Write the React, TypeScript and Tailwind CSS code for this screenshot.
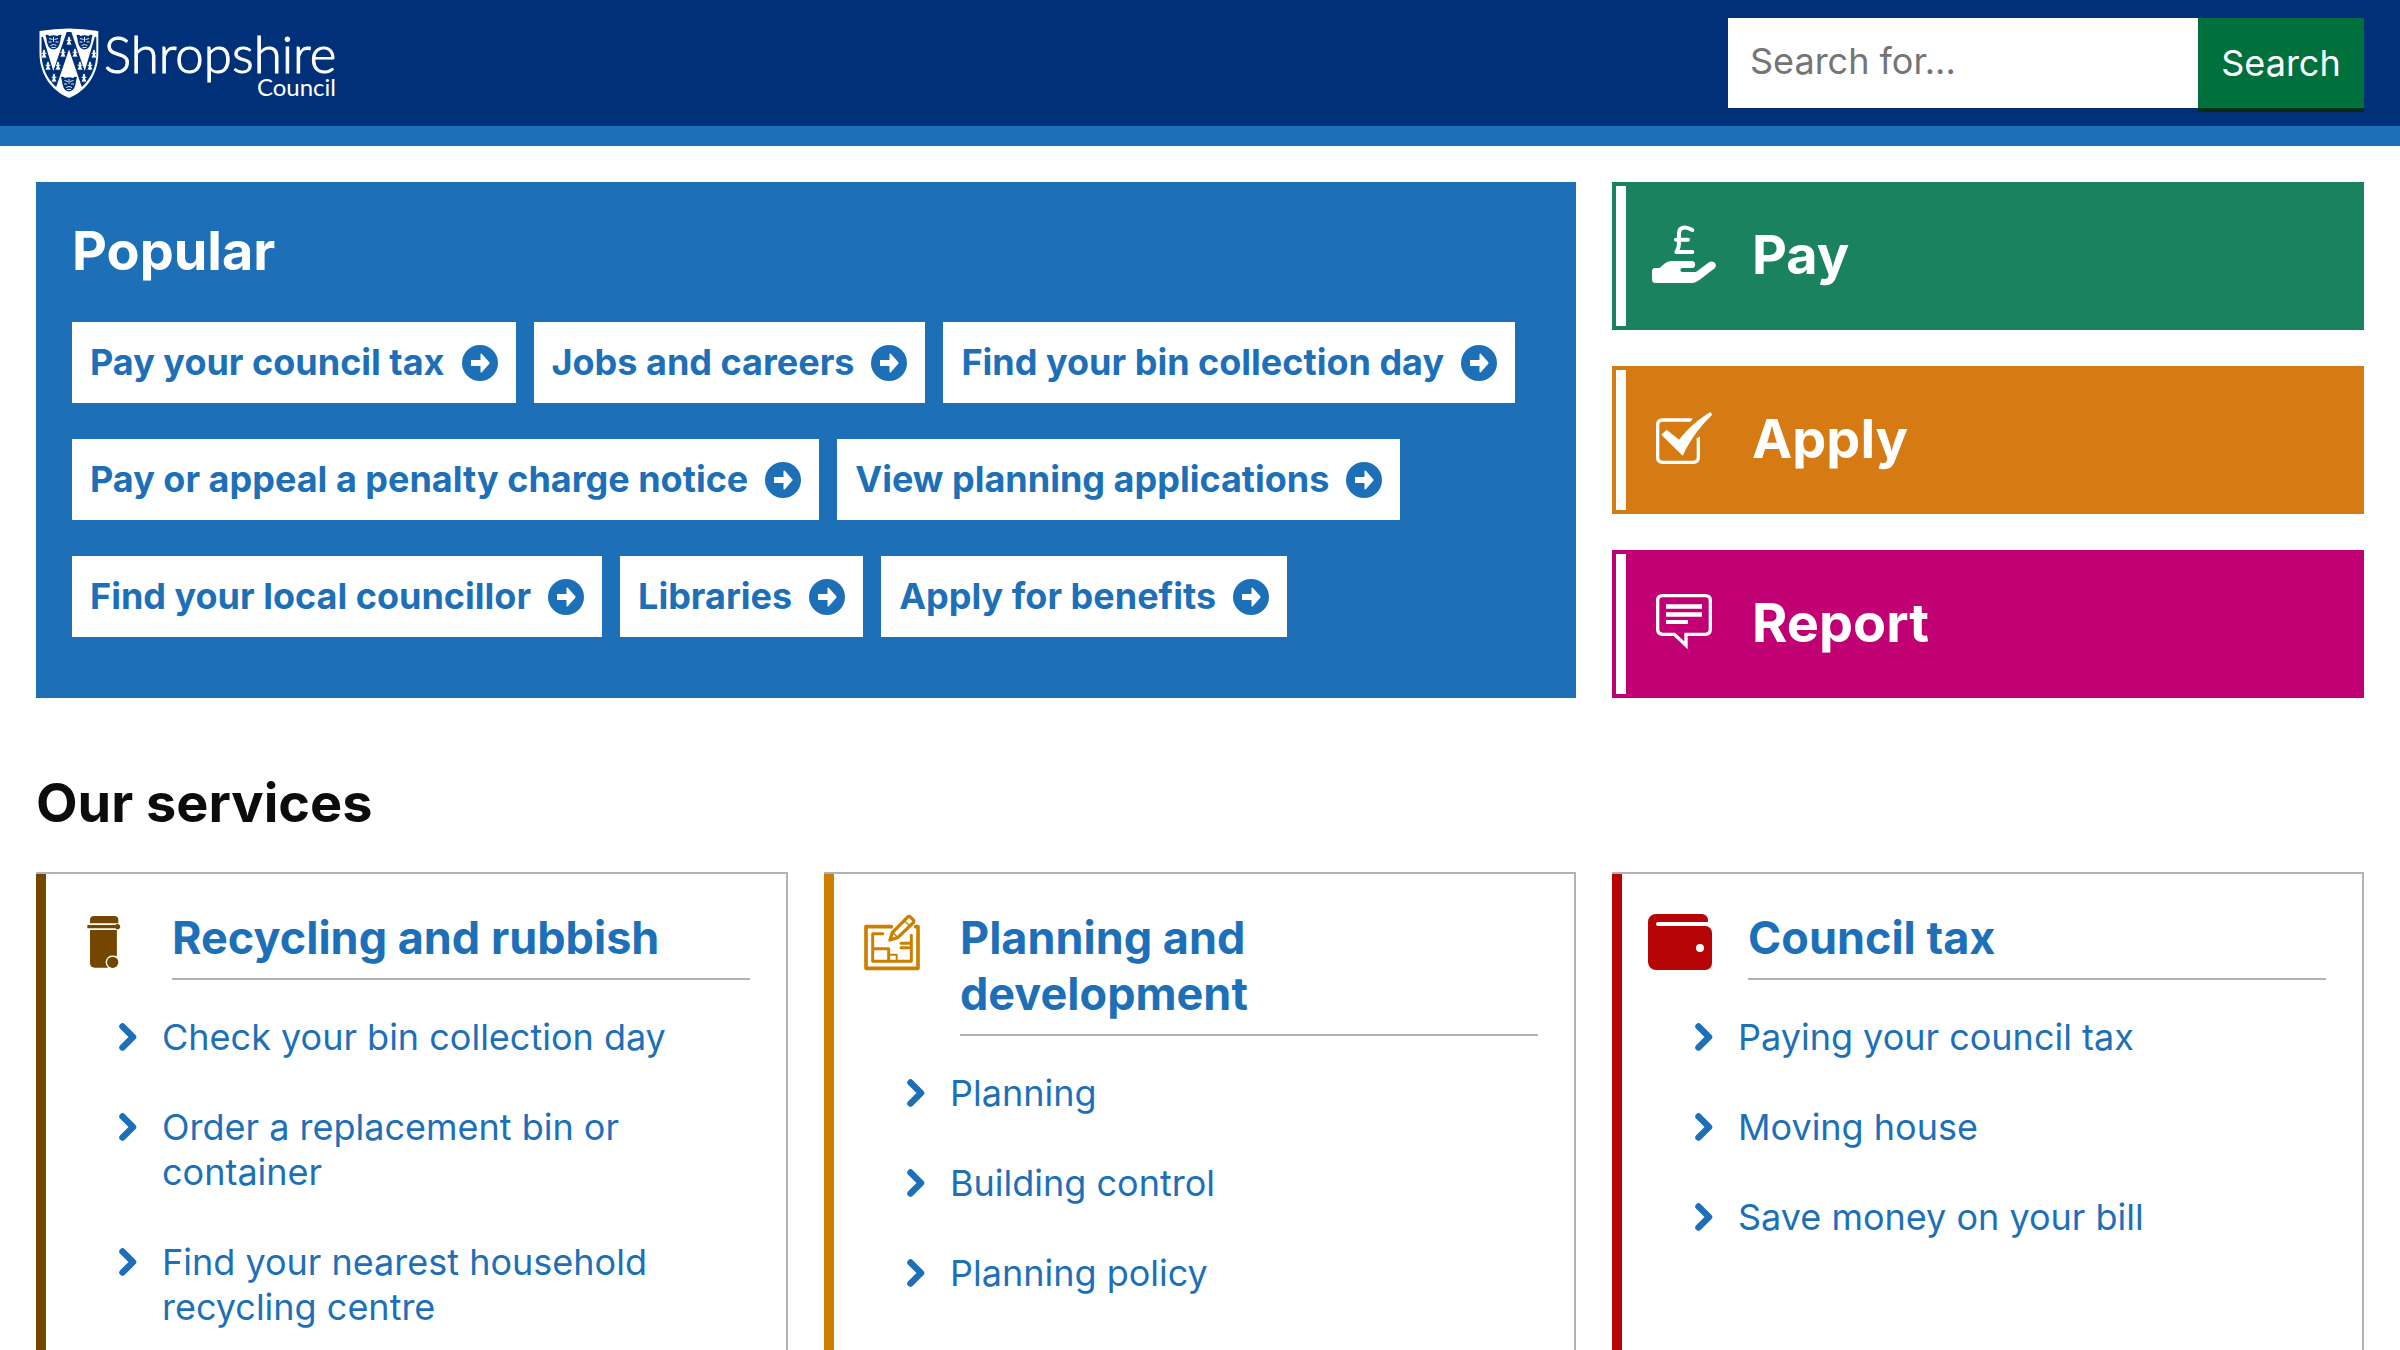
import type { ReactNode } from 'react';

const popularLinks = [
  'Pay your council tax',
  'Jobs and careers',
  'Find your bin collection day',
  'Pay or appeal a penalty charge notice',
  'View planning applications',
  'Find your local councillor',
  'Libraries',
  'Apply for benefits',
];

const ermineSpots = [
  [33, 13],
  [27, 25],
  [39, 25],
  [8, 26],
  [58, 26],
  [12, 38],
  [22, 38],
  [44, 38],
  [54, 38],
  [18, 50],
  [48, 50],
];

const leopardFaces = [
  [17.5, 14],
  [48.5, 14],
  [33, 56],
];

const Logo: React.FC = () => (
  <svg className="h-[76px] w-[304px] overflow-visible" viewBox="0 0 304 76" role="img" aria-label="Shropshire Council">
    <path d="M3.5 3Q33-2 62.3 3v22C62.3 47 50 63 33 70 16 63 3.5 47 3.5 25z" fill="#fff" />
    <path d="M5.5 9v16c0 19 10 32 21 38.500l3 1.500h7l3-1.500C50.500 57 60.300 44 60.300 25V9L36 4h-6z" fill="#003078" />
    <path d="M5.500 4 31 3 17.300 43zM60.300 4 35 3l13.700 40zM33 21.500 19.500 61 33 68l13.500-7z" fill="#fff" />
    {leopardFaces.map(([x, y]) => (
      <g key={`${x}-${y}`} transform={`translate(${x} ${y})`}>
        <path
          d="M-8-7q2-1 4 1 4-1.500 8 0 2-2 4-1l-1 4Q7 0 5.500 3.500 4 7 0 7.500-4 7-5.500 3.500-7 0-7-3z"
          fill="#003078"
        />
        <path
          d="M-4.500-3.500-1-2.500M4.500-3.500 1-2.500M-5 0h3M5 0H2M0-5v5M-3 3.500Q0 1.500 3 3.500M-2 5.500h4"
          stroke="#fff"
          strokeWidth="0.9"
          fill="none"
        />
      </g>
    ))}
    {ermineSpots.map(([x, y]) => (
      <path
        key={`${x}-${y}`}
        transform={`translate(${x} ${y})`}
        d="M0-4.500 1.300-3 .7-1.500 3-1 1 .2 2.500 4 .7 3.200 0 4.500-.7 3.200-2.500 4-1 .2-3-1-.7-1.500-1.300-3z"
        fill="#fff"
      />
    ))}
    <text
      x="68"
      y="45"
      fill="#fff"
      stroke="#fff"
      strokeWidth="1"
      fontSize="51"
      fontFamily="Lato, sans-serif"
      fontWeight="300"
    >
      Shropshire
    </text>
    <text x="300" y="68" fill="#fff" fontSize="24" fontFamily="Lato, sans-serif" textAnchor="end">
      Council
    </text>
  </svg>
);

const Icon: React.FC<{ children: ReactNode }> = ({ children }) => (
  <svg className="h-14 w-16 shrink-0 overflow-visible" viewBox="0 0 192 168" fill="none" aria-hidden="true">
    {children}
  </svg>
);

const PayIcon: React.FC = () => (
  <Icon>
    <path
      fill="currentColor"
      d="M8 126h14c10-6 18-21 38-21h59a10.500 10.500 0 0 1 0 21H91a6 6 0 0 0 0 12h41l39-29c12-8 28 6 17 18l-42 32c-9 7-15 12-28 12H10c-6 0-10-4-10-10v-25c0-6 3-10 8-10z"
    />
    <path
      stroke="currentColor"
      strokeWidth="12"
      strokeLinecap="round"
      strokeLinejoin="round"
      d="M121 12C98 0 81 3 81 22v30c0 14-2 16-8 26h48M72 41h36"
    />
  </Icon>
);

const ApplyIcon: React.FC = () => (
  <Icon>
    <path
      stroke="currentColor"
      strokeWidth="10"
      d="M121 30H32q-15 0-15 15v97q0 15 15 15h92q15 0 15-15V80"
    />
    <path fill="#d67a14" d="m126 24-14 14 12 4 16-18zM134 88l12-16-12-2z" />
    <path fill="currentColor" d="m28 74 16-15 37 30c28-34 60-64 95-83l4 9c-34 32-64 72-88 122z" />
  </Icon>
);

const ReportIcon: React.FC = () => (
  <Icon>
    <path
      stroke="currentColor"
      strokeWidth="10"
      d="M32 5h128q15 0 15 15v86q0 15-15 15h-58v33l-35-33H32q-15 0-15-15V20Q17 5 32 5z"
    />
    <path fill="currentColor" d="M42 31h108v13H42zM42 55h108v13H42zM42 78h66v12H42z" />
  </Icon>
);

const BinIcon: React.FC = () => (
  <Icon>
    <path fill="currentColor" d="M54 28V18q0-12 12-12h61q12 0 12 12v10zM54 48h80v113H68q-14 0-14-14z" />
    <path fill="currentColor" d="M46 33h84q2-4 9-3 6 3 6 8t-6 8q-7 1-9-3H46z" />
    <circle cx="122" cy="145" r="21" fill="#fff" />
    <path fill="#fff" d="M118 128h30v36h-30z" />
    <path fill="currentColor" d="M118 48h16v76h-16z" />
    <circle cx="122" cy="145" r="17" fill="currentColor" />
  </Icon>
);

const PlanIcon: React.FC = () => (
  <Icon>
    <g stroke="currentColor" strokeLinecap="round" strokeLinejoin="round">
      <path strokeWidth="11" d="M94 38H18v125h156V38h-7" />
      <path strokeWidth="9" d="M68 59H38v83h116V64M40 104h46v36M123 88h28M123 101h28" />
      <path strokeWidth="6" d="M88 122h22v18" />
      <path strokeWidth="10" d="m90 78 7-22 45-46q5-5 10 0l7 7q5 5 0 10l-46 44z" />
      <path strokeWidth="4" d="m133 20 18 17M99 56l14 14" />
    </g>
  </Icon>
);

const WalletIcon: React.FC = () => (
  <Icon>
    <path
      fill="currentColor"
      d="M24 0h138a18 18 0 0 1 18 18v6H30a6 6 0 0 0 0 12h142a20 20 0 0 1 20 20v92a20 20 0 0 1-20 20H24a24 24 0 0 1-24-24V24A24 24 0 0 1 24 0z"
    />
    <circle cx="156" cy="102" r="12" fill="#fff" />
  </Icon>
);

const CircleArrow: React.FC = () => (
  <svg className="size-9 shrink-0" viewBox="0 0 36 36" aria-hidden="true">
    <circle cx="18" cy="18" r="18" fill="currentColor" />
    <path fill="#fff" d="M9 15h9.500V9.500q0-1.500 1.300-.7l7.500 8.500q.6.700 0 1.400l-7.500 8.500q-1.300.8-1.300-.7V21H9z" />
  </svg>
);

const Chevron: React.FC = () => (
  <svg className="mt-2 h-7 w-[18px] shrink-0" viewBox="0 0 18 28" fill="none" aria-hidden="true">
    <path
      d="M3.500 3.500 14 14 3.500 24.500"
      stroke="currentColor"
      strokeWidth="6.500"
      strokeLinecap="round"
      strokeLinejoin="round"
    />
  </svg>
);

const actions = [
  { title: 'Pay', icon: <PayIcon />, colour: 'bg-[#1a825e] border-[#1a825e]' },
  { title: 'Apply', icon: <ApplyIcon />, colour: 'bg-[#d67a14] border-[#d67a14]' },
  { title: 'Report', icon: <ReportIcon />, colour: 'bg-[#c10074] border-[#c10074]' },
];

const services = [
  {
    title: 'Recycling and rubbish',
    icon: <BinIcon />,
    border: 'border-[#744700]',
    text: 'text-[#744700]',
    links: ['Check your bin collection day', 'Order a replacement bin or container', 'Find your nearest household recycling centre'],
  },
  {
    title: 'Planning and development',
    icon: <PlanIcon />,
    border: 'border-[#cd7f00]',
    text: 'text-[#cd7f00]',
    links: ['Planning', 'Building control', 'Planning policy'],
  },
  {
    title: 'Council tax',
    icon: <WalletIcon />,
    border: 'border-[#b70404]',
    text: 'text-[#b70404]',
    links: ['Paying your council tax', 'Moving house', 'Save money on your bill'],
  },
];

const Header: React.FC = () => (
  <header className="flex items-start justify-between border-b-20 border-[#1d70b8] bg-[#003078] px-9 pb-[14px]">
    <a href="#" className="mt-7">
      <Logo />
    </a>
    <form className="mt-[18px] flex items-start">
      <input
        type="search"
        aria-label="Search for"
        placeholder="Search for..."
        className="h-[90px] w-[470px] bg-white px-[22px] pb-1 text-[36px] placeholder:text-[#757575]"
      />
      <button type="button" className="h-[94px] w-[166px] border-b-4 border-[#002d18] bg-[#00703c] text-[36px] text-white">
        Search
      </button>
    </form>
  </header>
);

export default function App() {
  return (
    <div className="min-h-screen overflow-hidden bg-white font-['Inter',sans-serif] text-[#0b0c0c]">
      <Header />
      <main className="px-9">
        <div className="mt-9 grid grid-cols-3 gap-9">
          <section className="col-span-2 bg-[#1d70b8] px-9 pt-[33px]">
            <h2 className="text-[54px] leading-[72px] font-bold text-white">Popular</h2>
            <ul className="mt-[35px] flex flex-wrap gap-x-[18px] gap-y-9">
              {popularLinks.map((link) => (
                <li key={link}>
                  <a
                    href="#"
                    className="flex items-center gap-[17px] bg-white px-[18px] py-[18px] text-[36px] leading-[45px] font-bold text-[#1d70b8]"
                  >
                    {link}
                    <CircleArrow />
                  </a>
                </li>
              ))}
            </ul>
          </section>
          <div className="flex flex-col gap-9">
            {actions.map(({ title, icon, colour }) => (
              <a key={title} href="#" className={`flex h-[148px] border-4 text-white ${colour}`}>
                <span className="w-[10px] bg-white" />
                <span className="flex items-center gap-9 pb-1 pl-[26px]">
                  {icon}
                  <span className="text-[54px] font-bold">{title}</span>
                </span>
              </a>
            ))}
          </div>
        </div>
        <h2 className="mt-[69px] text-[54px] leading-[72px] font-bold">Our services</h2>
        <div className="mt-[33px] grid grid-cols-3 gap-9">
          {services.map(({ title, icon, border, text, links }) => (
            <section key={title} className="flex border-2 border-l-0 border-[#b1b4b6]">
              <div className={`w-full border-l-10 pt-9 pr-9 pb-9 ${border}`}>
                <div className="flex gap-9 pl-[26px]">
                  <div className={`pt-1 ${text}`}>{icon}</div>
                  <h3 className="flex-1 border-b-2 border-[#b1b4b6] pb-3 text-[45px] leading-[56px] font-bold text-[#1d70b8]">
                    <a href="#">{title}</a>
                  </h3>
                </div>
                <ul className="mt-[35px] flex flex-col gap-[45px] pl-[73px]">
                  {links.map((link) => (
                    <li key={link}>
                      <a href="#" className="flex gap-[25px] text-[36px] leading-[45px] text-[#1d70b8]">
                        <Chevron />
                        <span>{link}</span>
                      </a>
                    </li>
                  ))}
                </ul>
              </div>
            </section>
          ))}
        </div>
      </main>
    </div>
  );
}
